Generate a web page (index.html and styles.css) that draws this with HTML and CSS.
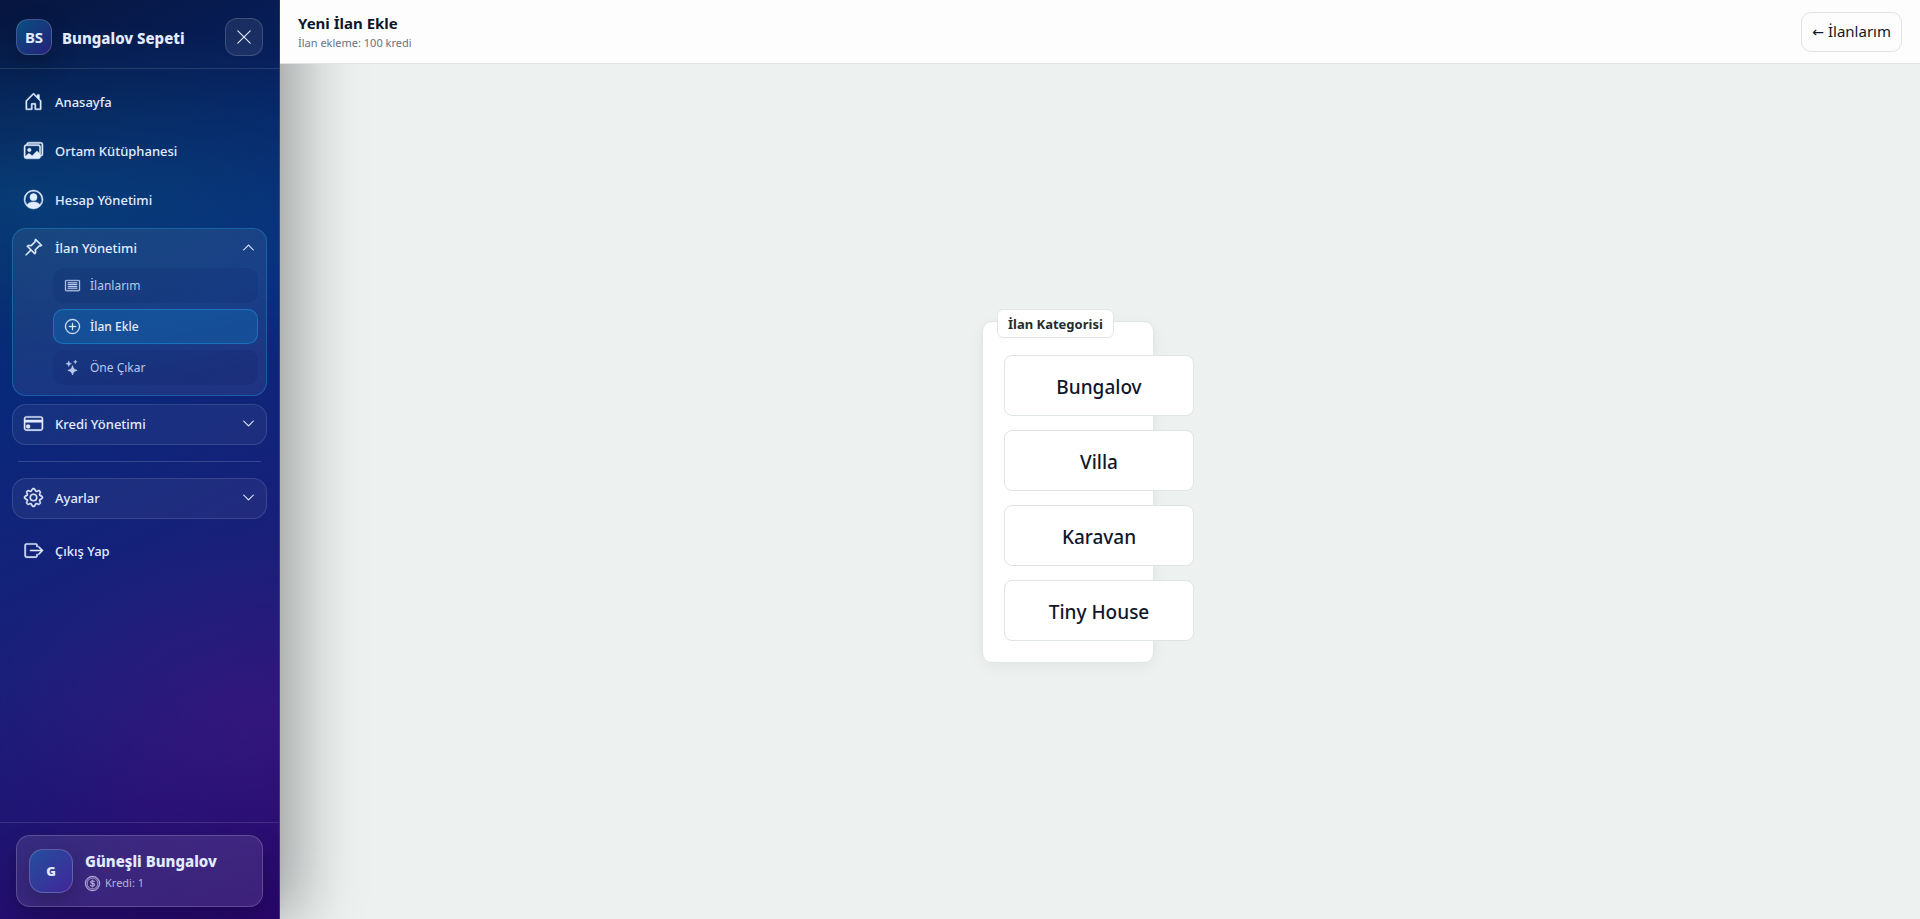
FILE: index.html
```html
<!DOCTYPE html>
<html lang="tr">
<head>
  <meta charset="UTF-8">
  <meta name="viewport" content="width=device-width, initial-scale=1">
  <title>Yeni İlan Ekle</title>
  <link rel="stylesheet" href="styles.css">
</head>
<body>

  <!-- Sidebar -->
  <aside class="sidebar">
    <div class="brand">
      <span class="brand-logo">BS</span>
      <span class="brand-name">Bungalov Sepeti</span>
      <button class="close-btn" type="button" aria-label="Menüyü kapat">
        <svg viewBox="0 0 16 16"><path d="M2.146 2.854a.5.5 0 1 1 .708-.708L8 7.293l5.146-5.147a.5.5 0 0 1 .708.708L8.707 8l5.147 5.146a.5.5 0 0 1-.708.708L8 8.707l-5.146 5.147a.5.5 0 0 1-.708-.708L7.293 8z"/></svg>
      </button>
    </div>

    <nav class="menu">
      <a class="menu-link" href="#">
        <svg viewBox="0 0 16 16"><path d="M8.354 1.146a.5.5 0 0 0-.708 0l-6 6A.5.5 0 0 0 1.500 7.500v7a.5.5 0 0 0 .5.5h4.500a.5.5 0 0 0 .5-.5v-4h2v4a.5.5 0 0 0 .5.5H14a.5.5 0 0 0 .5-.5v-7a.5.5 0 0 0-.146-.354L13 5.793V2.500a.5.5 0 0 0-.5-.5h-1a.5.5 0 0 0-.5.5v1.293zM2.500 14V7.707l5.500-5.500 5.500 5.500V14H10v-4a.5.5 0 0 0-.5-.5h-3a.5.5 0 0 0-.5.5v4z"/></svg>
        Anasayfa
      </a>
      <a class="menu-link" href="#">
        <svg viewBox="0 0 16 16"><path d="M4.502 9a1.500 1.500 0 1 0 0-3 1.500 1.500 0 0 0 0 3"/><path d="M14.002 13a2 2 0 0 1-2 2h-10a2 2 0 0 1-2-2V5A2 2 0 0 1 2 3a2 2 0 0 1 2-2h10a2 2 0 0 1 2 2v8a2 2 0 0 1-1.998 2M14 2H4a1 1 0 0 0-1 1h9.002a2 2 0 0 1 2 2v7A1 1 0 0 0 15 11V3a1 1 0 0 0-1-1M2.002 4a1 1 0 0 0-1 1v8l2.646-2.354a.5.5 0 0 1 .63-.062l2.660 1.773 3.710-3.710a.5.5 0 0 1 .577-.094l1.777 1.947V5a1 1 0 0 0-1-1z"/></svg>
        Ortam Kütüphanesi
      </a>
      <a class="menu-link" href="#">
        <svg viewBox="0 0 16 16"><path d="M11 6a3 3 0 1 1-6 0 3 3 0 0 1 6 0"/><path fill-rule="evenodd" d="M0 8a8 8 0 1 1 16 0A8 8 0 0 1 0 8m8-7a7 7 0 0 0-5.468 11.370C3.242 11.226 4.805 10 8 10s4.757 1.225 5.468 2.370A7 7 0 0 0 8 1"/></svg>
        Hesap Yönetimi
      </a>

      <div class="group group-open">
        <button class="group-title" type="button" aria-expanded="true">
          <svg viewBox="0 0 16 16"><path d="M9.828.722a.5.5 0 0 1 .354.146l4.950 4.950a.5.5 0 0 1 0 .707c-.48.48-1.072.588-1.503.588-.177 0-.335-.018-.46-.039l-3.134 3.134a6 6 0 0 1 .16 1.013c.046.702-.032 1.687-.72 2.375a.5.5 0 0 1-.707 0l-2.829-2.828-3.182 3.182c-.195.195-1.219.902-1.414.707s.512-1.220.707-1.414l3.182-3.182-2.828-2.829a.5.5 0 0 1 0-.707c.688-.688 1.673-.767 2.375-.72a6 6 0 0 1 1.013.16l3.134-3.133a3 3 0 0 1-.04-.461c0-.43.108-1.022.589-1.503a.5.5 0 0 1 .353-.146m.122 2.112v-.002zm0-.002v.002a.5.5 0 0 1-.122.510L6.293 6.878a.5.5 0 0 1-.511.120H5.780l-.014-.004a5 5 0 0 0-.288-.076 5 5 0 0 0-.765-.116c-.422-.028-.836.008-1.175.150l5.510 5.509c.141-.340.177-.753.149-1.175a5 5 0 0 0-.192-1.054l-.004-.013v-.001a.5.5 0 0 1 .120-.512l3.536-3.535a.5.5 0 0 1 .532-.115l.096.022c.087.017.208.034.344.034q.172.002.343-.040L9.927 2.028q-.042.172-.040.343a1.800 1.800 0 0 0 .062.460z"/></svg>
          İlan Yönetimi
          <svg class="chevron" viewBox="0 0 16 16"><path d="M7.646 4.646a.5.5 0 0 1 .708 0l6 6a.5.5 0 0 1-.708.708L8 5.707l-5.646 5.647a.5.5 0 0 1-.708-.708z"/></svg>
        </button>
        <div class="submenu">
          <a class="sub-link" href="#">
            <svg viewBox="0 0 16 16"><path d="M14.500 2h-13A1.500 1.500 0 0 0 0 3.500v9A1.500 1.500 0 0 0 1.500 14h13a1.500 1.500 0 0 0 1.500-1.500v-9A1.500 1.500 0 0 0 14.500 2m0 1a.5.5 0 0 1 .5.5v9a.5.5 0 0 1-.5.5h-13a.5.5 0 0 1-.5-.5v-9a.5.5 0 0 1 .5-.5z"/><path d="M3 4.500h10v1H3zm0 2h10v1H3zm0 2h10v1H3zm0 2h10v1H3z"/></svg>
            İlanlarım
          </a>
          <a class="sub-link sub-active" href="#">
            <svg viewBox="0 0 16 16"><path d="M8 15A7 7 0 1 1 8 1a7 7 0 0 1 0 14m0 1A8 8 0 1 0 8 0a8 8 0 0 0 0 16"/><path d="M8 4a.5.5 0 0 1 .5.5v3h3a.5.5 0 0 1 0 1h-3v3a.5.5 0 0 1-1 0v-3h-3a.5.5 0 0 1 0-1h3v-3A.5.5 0 0 1 8 4"/></svg>
            İlan Ekle
          </a>
          <a class="sub-link" href="#">
            <svg viewBox="0 0 16 16"><path d="M7.657 6.247c.110-.330.576-.330.686 0l.645 1.937a2.890 2.890 0 0 0 1.829 1.828l1.936.645c.330.110.330.576 0 .686l-1.937.645a2.890 2.890 0 0 0-1.828 1.829l-.645 1.936a.361.361 0 0 1-.686 0l-.645-1.937a2.890 2.890 0 0 0-1.828-1.828l-1.937-.645a.361.361 0 0 1 0-.686l1.937-.645a2.890 2.890 0 0 0 1.828-1.828zM3.794 1.148a.217.217 0 0 1 .412 0l.387 1.162c.173.518.579.924 1.097 1.097l1.162.387a.217.217 0 0 1 0 .412l-1.162.387A1.730 1.730 0 0 0 4.593 5.690l-.387 1.162a.217.217 0 0 1-.412 0L3.407 5.690A1.730 1.730 0 0 0 2.310 4.593l-1.162-.387a.217.217 0 0 1 0-.412l1.162-.387A1.730 1.730 0 0 0 3.407 2.310zM10.863.099a.145.145 0 0 1 .274 0l.258.774c.115.346.386.617.732.732l.774.258a.145.145 0 0 1 0 .274l-.774.258a1.160 1.160 0 0 0-.732.732l-.258.774a.145.145 0 0 1-.274 0l-.258-.774a1.160 1.160 0 0 0-.732-.732L9.100 2.137a.145.145 0 0 1 0-.274l.774-.258c.346-.115.617-.386.732-.732z"/></svg>
            Öne Çıkar
          </a>
        </div>
      </div>

      <div class="group">
        <button class="group-title" type="button" aria-expanded="false">
          <svg viewBox="0 0 16 16"><path d="M0 4a2 2 0 0 1 2-2h12a2 2 0 0 1 2 2v8a2 2 0 0 1-2 2H2a2 2 0 0 1-2-2zm2-1a1 1 0 0 0-1 1v1h14V4a1 1 0 0 0-1-1zm13 4H1v5a1 1 0 0 0 1 1h12a1 1 0 0 0 1-1z"/><path d="M2 10a1 1 0 0 1 1-1h1a1 1 0 0 1 1 1v1a1 1 0 0 1-1 1H3a1 1 0 0 1-1-1z"/></svg>
          Kredi Yönetimi
          <svg class="chevron" viewBox="0 0 16 16"><path d="M1.646 4.646a.5.5 0 0 1 .708 0L8 10.293l5.646-5.647a.5.5 0 0 1 .708.708l-6 6a.5.5 0 0 1-.708 0l-6-6a.5.5 0 0 1 0-.708"/></svg>
        </button>
      </div>

      <hr class="divider">

      <div class="group">
        <button class="group-title" type="button" aria-expanded="false">
          <svg viewBox="0 0 16 16"><path d="M8 4.754a3.246 3.246 0 1 0 0 6.492 3.246 3.246 0 0 0 0-6.492M5.754 8a2.246 2.246 0 1 1 4.492 0 2.246 2.246 0 0 1-4.492 0"/><path d="M9.796 1.343c-.527-1.790-3.065-1.790-3.592 0l-.094.319a.873.873 0 0 1-1.255.520l-.292-.160c-1.640-.892-3.433.902-2.540 2.541l.159.292a.873.873 0 0 1-.520 1.255l-.319.094c-1.790.527-1.790 3.065 0 3.592l.319.094a.873.873 0 0 1 .520 1.255l-.160.292c-.892 1.640.901 3.434 2.541 2.540l.292-.159a.873.873 0 0 1 1.255.520l.094.319c.527 1.790 3.065 1.790 3.592 0l.094-.319a.873.873 0 0 1 1.255-.520l.292.160c1.640.893 3.434-.902 2.540-2.541l-.159-.292a.873.873 0 0 1 .520-1.255l.319-.094c1.790-.527 1.790-3.065 0-3.592l-.319-.094a.873.873 0 0 1-.520-1.255l.160-.292c.893-1.640-.902-3.433-2.541-2.540l-.292.159a.873.873 0 0 1-1.255-.520zm-2.633.283c.246-.835 1.428-.835 1.674 0l.094.319a1.873 1.873 0 0 0 2.693 1.115l.291-.160c.764-.415 1.600.420 1.184 1.185l-.159.292a1.873 1.873 0 0 0 1.116 2.692l.318.094c.835.246.835 1.428 0 1.674l-.319.094a1.873 1.873 0 0 0-1.115 2.693l.160.291c.415.764-.420 1.600-1.185 1.184l-.291-.159a1.873 1.873 0 0 0-2.693 1.116l-.094.318c-.246.835-1.428.835-1.674 0l-.094-.319a1.873 1.873 0 0 0-2.692-1.115l-.292.160c-.764.415-1.600-.420-1.184-1.185l.159-.291A1.873 1.873 0 0 0 1.945 8.930l-.319-.094c-.835-.246-.835-1.428 0-1.674l.319-.094A1.873 1.873 0 0 0 3.060 4.377l-.160-.292c-.415-.764.420-1.600 1.185-1.184l.292.159a1.873 1.873 0 0 0 2.692-1.115z"/></svg>
          Ayarlar
          <svg class="chevron" viewBox="0 0 16 16"><path d="M1.646 4.646a.5.5 0 0 1 .708 0L8 10.293l5.646-5.647a.5.5 0 0 1 .708.708l-6 6a.5.5 0 0 1-.708 0l-6-6a.5.5 0 0 1 0-.708"/></svg>
        </button>
      </div>

      <a class="menu-link logout" href="#">
        <svg viewBox="0 0 16 16"><path d="M11.500 5V3.500A1.500 1.500 0 0 0 10 2H2A1.500 1.500 0 0 0 .5 3.500v9A1.500 1.500 0 0 0 2 14h8a1.500 1.500 0 0 0 1.500-1.500V11h-1v1.500a.5.5 0 0 1-.5.5H2a.5.5 0 0 1-.5-.5v-9A.5.5 0 0 1 2 3h8a.5.5 0 0 1 .5.5V5z"/><path d="M15.854 8.354a.5.5 0 0 0 0-.708l-3-3a.5.5 0 0 0-.708.708L14.293 7.500H5.500a.5.5 0 0 0 0 1h8.793l-2.147 2.146a.5.5 0 0 0 .708.708z"/></svg>
        Çıkış Yap
      </a>
    </nav>

    <div class="sidebar-footer">
      <div class="user-card">
        <span class="avatar">G</span>
        <div>
          <div class="user-name">Güneşli Bungalov</div>
          <div class="user-credit">
            <svg viewBox="0 0 16 16"><path d="M5.500 9.511c.076.954.830 1.697 2.182 1.785V12h.6v-.709c1.400-.098 2.218-.846 2.218-1.932 0-.987-.626-1.496-1.745-1.760l-.473-.112V5.570c.600.068.982.396 1.074.850h1.052c-.076-.919-.864-1.638-2.126-1.716V4h-.6v.719c-1.195.117-2.010.836-2.010 1.853 0 .900.606 1.472 1.613 1.707l.397.098v2.034c-.615-.093-1.022-.430-1.114-.900zm2.177-2.166c-.590-.137-.910-.416-.910-.836 0-.470.345-.822.915-.925v1.760h-.005zm.692 1.193c.717.166 1.048.435 1.048.910 0 .542-.412.914-1.135.982V8.518z"/><path d="M8 15A7 7 0 1 1 8 1a7 7 0 0 1 0 14m0 1A8 8 0 1 0 8 0a8 8 0 0 0 0 16"/><path d="M8 13.500a5.500 5.500 0 1 1 0-11 5.500 5.500 0 0 1 0 11m0 .5A6 6 0 1 0 8 2a6 6 0 0 0 0 12"/></svg>
            Kredi: 1
          </div>
        </div>
      </div>
    </div>
  </aside>

  <!-- Content -->
  <div class="page">
    <header class="topbar">
      <div>
        <h1>Yeni İlan Ekle</h1>
        <p>İlan ekleme: 100 kredi</p>
      </div>
      <a class="back-btn" href="#"><span class="arrow">←</span> İlanlarım</a>
    </header>

    <main class="content">
      <section class="category" aria-labelledby="category-title">
        <h2 class="category-title" id="category-title">İlan Kategorisi</h2>
        <button class="category-btn" type="button">Bungalov</button>
        <button class="category-btn" type="button">Villa</button>
        <button class="category-btn" type="button">Karavan</button>
        <button class="category-btn" type="button">Tiny House</button>
      </section>
    </main>
  </div>

</body>
</html>
```
FILE: styles.css
```css
* {
  box-sizing: border-box;
}
body {
  margin: 0;
  min-height: 100vh;
  display: flex;
  font-family: "Segoe UI", "Noto Sans", sans-serif;
  background: #edf1f0;
  color: #0f172a;
}
a {
  color: inherit;
  text-decoration: none;
}
button {
  font: inherit;
  color: inherit;
  cursor: pointer;
}
svg {
  fill: currentColor;
  flex: none;
  overflow: visible;
}

/* Sidebar */
.sidebar {
  position: relative;
  z-index: 1;
  width: 280px;
  flex: none;
  display: flex;
  flex-direction: column;
  color: #e2ecff;
  border-right: 1px solid rgba(255,255,255,0.14);
  background:
    radial-gradient(700px 240px at 10% 22%, rgba(8,110,160,0.36), transparent 75%),
    radial-gradient(380px 260px at 90% 78%, rgba(110,30,160,0.24), transparent 70%),
    linear-gradient(155deg, #06163f 0%, #08287a 38%, #1a1e78 66%, #28066a 100%);
  box-shadow: 18px 0 60px rgba(0,0,0,0.35);
}
.brand {
  display: flex;
  align-items: center;
  padding: 18px 16px 12px;
  border-bottom: 1px solid rgba(255,255,255,0.12);
}
.brand-logo {
  width: 36px;
  height: 36px;
  display: grid;
  place-items: center;
  border: 1px solid rgba(255,255,255,0.18);
  border-radius: 12px;
  background: linear-gradient(135deg, #075080, #26207a);
  box-shadow: 0 10px 24px rgba(0,0,0,0.25);
  font-size: 15px;
  font-weight: 700;
}
.brand-name {
  margin-left: 10px;
  padding-top: 2px;
  font-size: 15px;
  font-weight: 800;
}
.close-btn {
  width: 38px;
  height: 38px;
  margin-left: auto;
  display: grid;
  place-items: center;
  padding: 0;
  border: 1px solid rgba(255,255,255,0.16);
  border-radius: 12px;
  background: rgba(255,255,255,0.08);
}
.close-btn svg {
  width: 18px;
  height: 18px;
}
.menu {
  flex: 1;
  padding: 12px;
}
.menu-link,
.group-title {
  display: flex;
  align-items: center;
  gap: 12px;
  font-size: 13px;
  font-weight: 500;
}
.menu-link {
  height: 41px;
  margin-bottom: 8px;
  padding: 0 12px;
}
.menu .logout {
  margin-top: 11px;
}
.menu-link svg,
.group-title svg {
  width: 19px;
  height: 19px;
  stroke: currentColor;
  stroke-width: 0.4;
}
.group {
  margin-bottom: 8px;
  border: 1px solid rgba(255,255,255,0.12);
  border-radius: 14px;
  background: rgba(255,255,255,0.05);
}
.group-open {
  border-color: rgba(34,160,230,0.36);
  background: rgba(255,255,255,0.07);
}
.group-title {
  width: 100%;
  height: 39px;
  padding: 0 11px 2px;
  border: 0;
  background: none;
}
.group-title .chevron {
  width: 13px;
  height: 13px;
  margin-left: auto;
}
.submenu {
  display: grid;
  gap: 6px;
  padding: 0 8px 10px 40px;
}
.sub-link {
  height: 35px;
  display: flex;
  align-items: center;
  gap: 10px;
  padding: 0 11px;
  border: 1px solid transparent;
  border-radius: 10px;
  background: rgba(2,6,60,0.08);
  color: #b8c8ea;
  font-size: 12px;
}
.sub-link svg {
  width: 15px;
  height: 15px;
  stroke: currentColor;
  stroke-width: 0.3;
}
.sub-active {
  border-color: rgba(34,160,230,0.45);
  background: rgba(14,110,180,0.4);
  color: #e2ecff;
  font-weight: 500;
}
.divider {
  margin: 16px 6px;
  border: 0;
  border-top: 1px solid rgba(255,255,255,0.16);
}
.sidebar-footer {
  padding: 12px 16px;
  border-top: 1px solid rgba(255,255,255,0.12);
}
.user-card {
  display: flex;
  align-items: center;
  gap: 12px;
  padding: 12px;
  border: 1px solid rgba(255,255,255,0.18);
  border-radius: 14px;
  background: rgba(255,255,255,0.1);
  box-shadow: 0 10px 24px rgba(0,0,0,0.2);
}
.avatar {
  width: 44px;
  height: 44px;
  display: grid;
  place-items: center;
  border: 1px solid rgba(255,255,255,0.2);
  border-radius: 14px;
  background: linear-gradient(135deg, #234f9c, #42269a);
  box-shadow: 0 8px 20px rgba(0,0,0,0.2);
  font-size: 13px;
  font-weight: 900;
}
.user-name {
  padding-top: 2px;
  font-size: 15px;
  line-height: 22px;
  font-weight: 800;
}
.user-credit {
  display: flex;
  align-items: center;
  gap: 5px;
  font-size: 11px;
  line-height: 22px;
  color: #b9b2dc;
}
.user-credit svg {
  width: 15px;
  height: 15px;
  stroke: currentColor;
  stroke-width: 0.3;
}

/* Content */
.page {
  flex: 1;
  display: flex;
  flex-direction: column;
}
.topbar {
  position: relative;
  z-index: 2;
  height: 64px;
  display: flex;
  align-items: center;
  justify-content: space-between;
  padding: 0 18px;
  border-bottom: 1px solid #dfe3e3;
  background: #fdfdfd;
}
.topbar h1 {
  margin: 0;
  font-size: 15px;
  line-height: 22px;
}
.topbar p {
  margin: 0;
  font-size: 11px;
  line-height: 18px;
  color: #6b7280;
}
.back-btn {
  padding: 7px 10px;
  border: 1px solid #dfe3e6;
  border-radius: 10px;
  font-size: 15px;
  line-height: 23px;
}
.back-btn .arrow {
  font-family: "DejaVu Sans", sans-serif;
  font-size: 14px;
}
.content {
  flex: 1;
  display: flex;
  align-items: center;
  justify-content: center;
  padding-right: 64px;
}
.category {
  position: relative;
  width: 172px;
  display: grid;
  gap: 14px;
  padding: 33px 21px 21px;
  border: 1px solid #e0e5e5;
  border-radius: 10px;
  background: #fff;
  box-shadow: 0 4px 14px rgba(15,23,42,0.05);
}
.category-title {
  position: absolute;
  top: -13px;
  left: 14px;
  margin: 0;
  padding: 4px 10px 2px;
  border: 1px solid #e0e5e5;
  border-radius: 6px;
  background: #fff;
  color: #1f2d2d;
  font-size: 13px;
  line-height: 21px;
  white-space: nowrap;
}
.category-btn {
  width: 190px;
  height: 61px;
  padding: 4px 6px 0;
  border: 1px solid #dfe5e5;
  border-radius: 8px;
  background: #fff;
  font-size: 19px;
  font-weight: 500;
}
```
